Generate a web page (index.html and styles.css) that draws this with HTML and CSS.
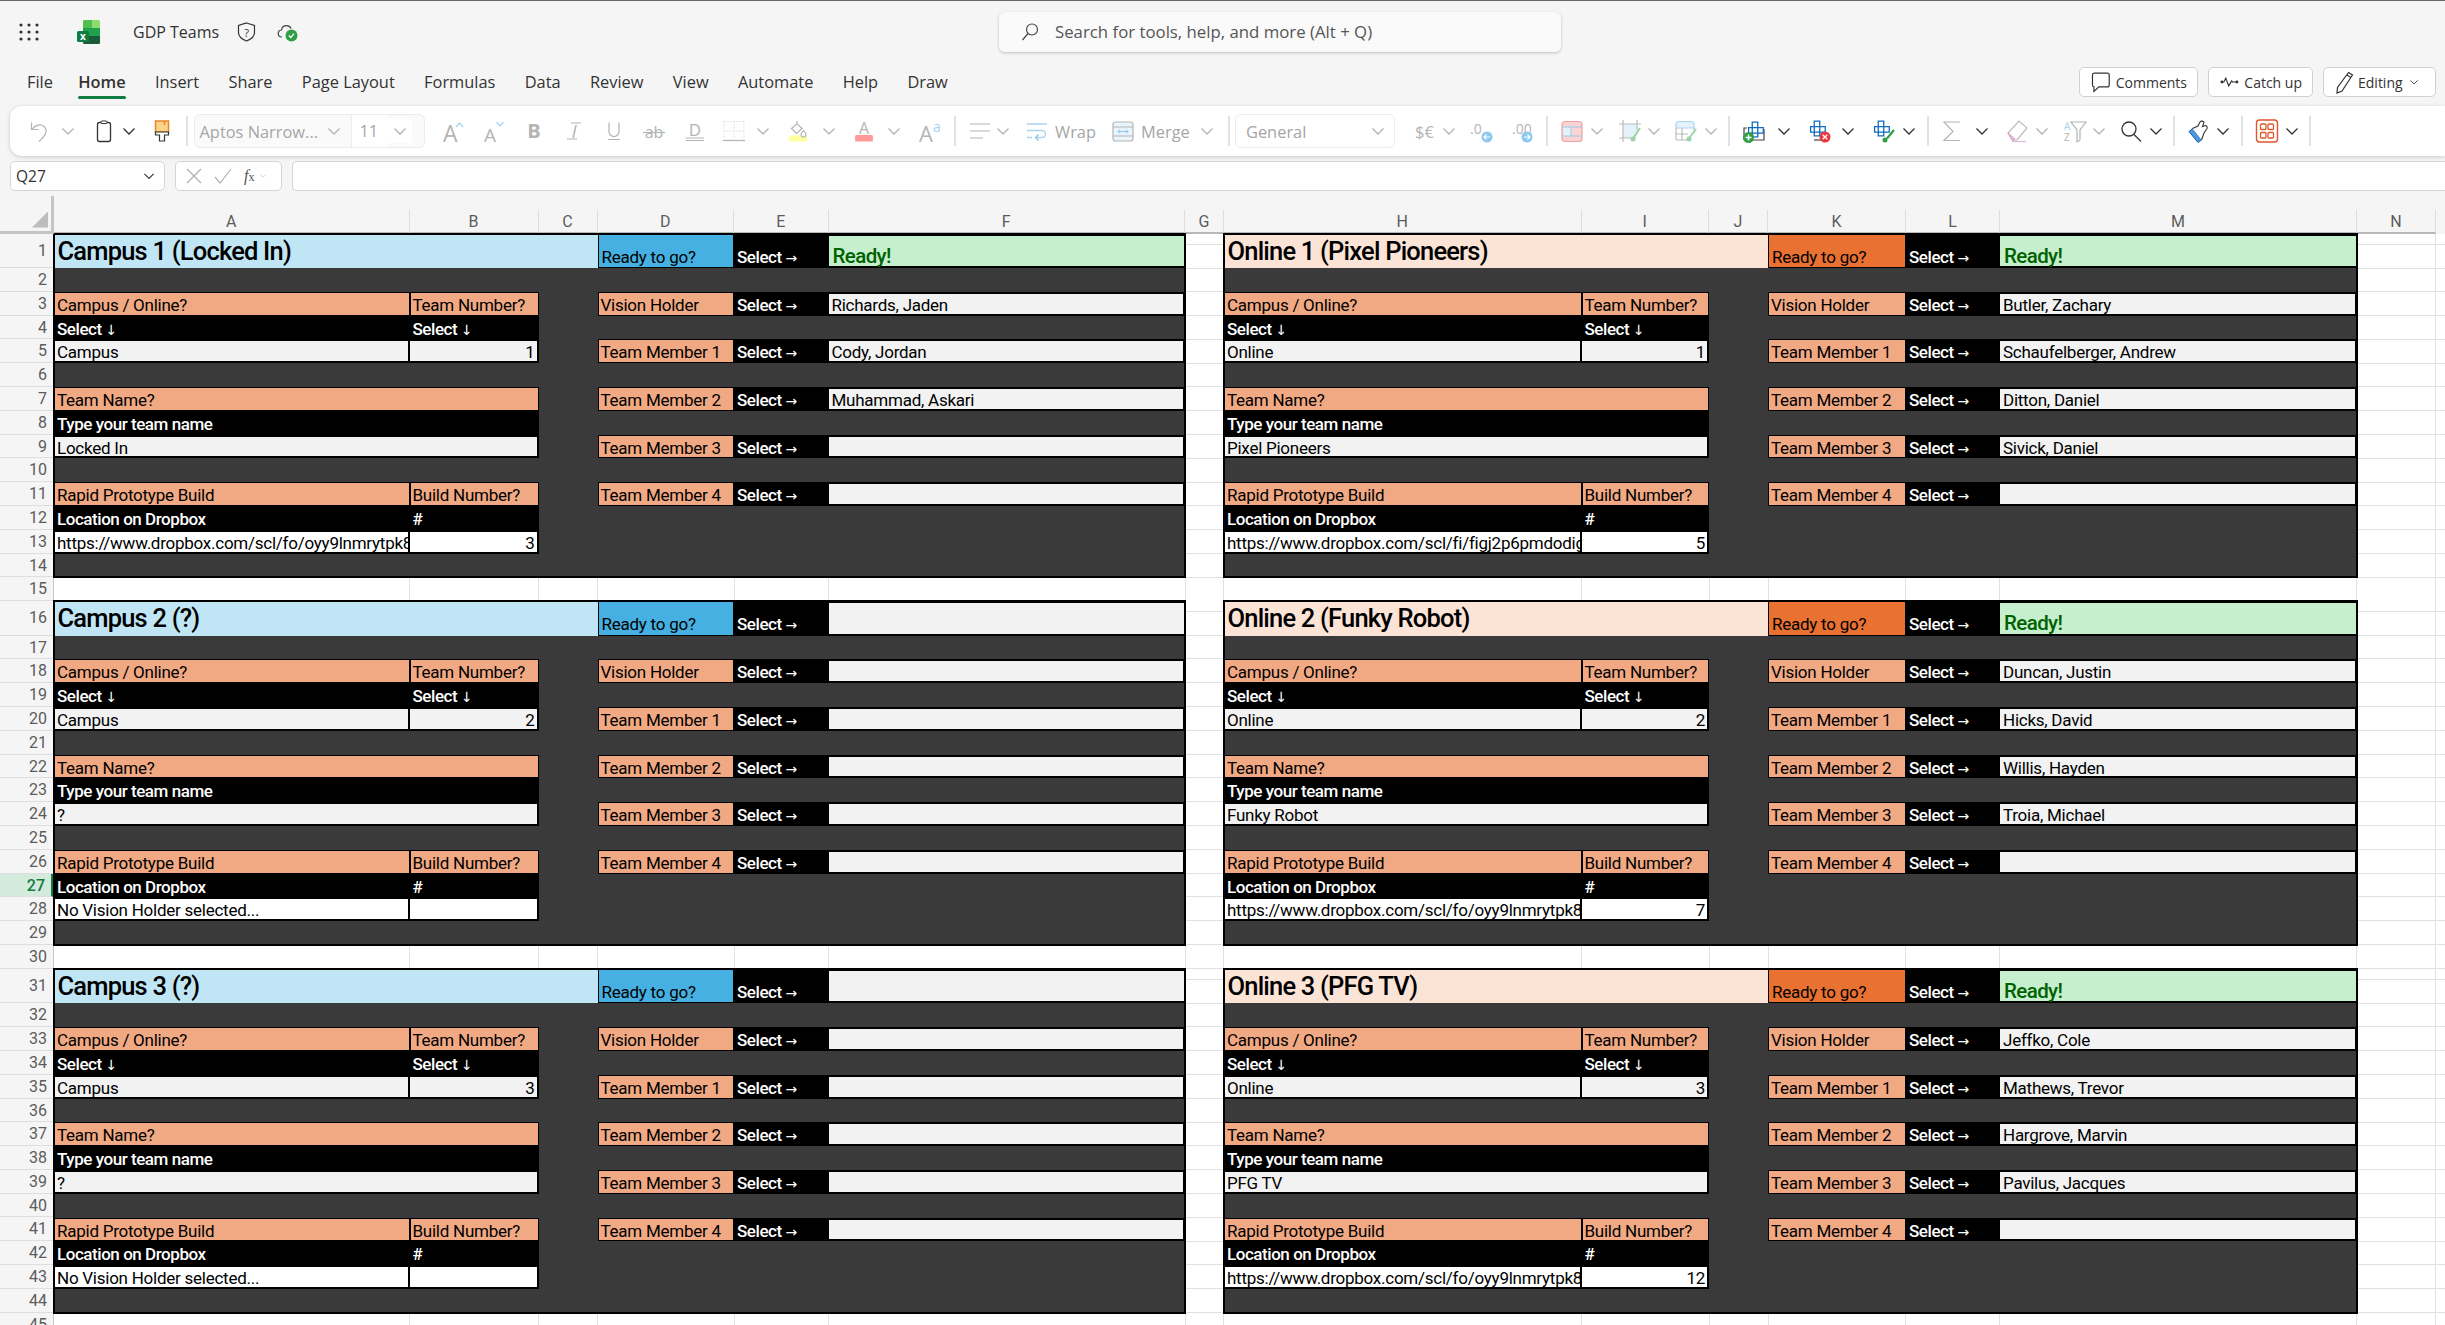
FILE: index.html
```html
<!DOCTYPE html>
<html lang="en">
<head>
    <meta charset="UTF-8">
    <title>GDP Teams</title>
    <link rel="stylesheet" href="styles.css">
</head>
<body>
    <svg class="defs" width="0" height="0">
        <symbol id="chev" viewBox="0 0 24 24"><path d="M6.5 9.5l5.5 5.5 5.5-5.5" fill="none" stroke="currentColor" stroke-width="1.3"/></symbol>
        <symbol id="sep" viewBox="0 0 24 30"><path d="M12 0v30" stroke="#c4c4c4" stroke-width="1"/></symbol>
        <symbol id="crossblue" viewBox="0 0 24 24">
            <path d="M9 3.5h6v6h6v6h-6v4H9v-4H5v-6h4z" fill="#fff" stroke="#0f6cbd" stroke-width="1.4"/>
            <path d="M9 9.5h6v6H9z" fill="none" stroke="#0f6cbd" stroke-width="1.4"/>
        </symbol>
    </svg>

    <header class="titlebar">
        <svg class="waffle" width="20" height="18" viewBox="0 0 20 18" fill="#333">
            <circle cx="2" cy="2" r="1.6"/><circle cx="10" cy="2" r="1.6"/><circle cx="18" cy="2" r="1.6"/>
            <circle cx="2" cy="9" r="1.6"/><circle cx="10" cy="9" r="1.6"/><circle cx="18" cy="9" r="1.6"/>
            <circle cx="2" cy="16" r="1.6"/><circle cx="10" cy="16" r="1.6"/><circle cx="18" cy="16" r="1.6"/>
        </svg>
        <svg class="logo" width="23" height="24" viewBox="0 0 23 24">
            <path d="M6 1.5A1.5 1.5 0 0 1 7.500 0H17v8H6z" fill="#4fbf4f"/>
            <path d="M15 0h6.500A1.500 1.500 0 0 1 23 1.500V8h-8z" fill="#8ddc6e"/>
            <path d="M6 8h17v8H6z" fill="#21a04e"/>
            <path d="M6 16h17v6.500a1.500 1.500 0 0 1-1.500 1.500h-14A1.500 1.500 0 0 1 6 22.500z" fill="#185c37"/>
            <rect x="0" y="11" width="12" height="11" rx="1.500" fill="#107c41"/>
            <text x="6" y="20" text-anchor="middle" font-family="Open Sans" font-size="10" font-weight="700" fill="#fff">x</text>
        </svg>
        <span class="doc-name">GDP Teams</span>
        <svg class="shield" width="21" height="20" viewBox="0 0 21 20">
            <path d="M10.500 1l8 2.500v7c0 4-3.500 6.800-8 8.500-4.500-1.700-8-4.500-8-8.500v-7z" fill="none" stroke="#333" stroke-width="1.200"/>
            <text x="10.500" y="14.500" text-anchor="middle" font-family="Open Sans" font-size="11" fill="#333">?</text>
        </svg>
        <svg class="cloud" width="21" height="20" viewBox="0 0 21 20">
            <path d="M5 15a3.500 3.500 0 0 1-.5-7A5 5 0 0 1 14 6.500" fill="none" stroke="#444" stroke-width="1.200"/>
            <circle cx="14.500" cy="13.500" r="6" fill="#2f9e44"/>
            <path d="M11.800 13.500l2 2 3.200-3.800" fill="none" stroke="#fff" stroke-width="1.200"/>
        </svg>
        <div class="search">
            <svg width="18" height="20" viewBox="0 0 18 20"><circle cx="11" cy="7.500" r="5.500" fill="none" stroke="#444" stroke-width="1.200"/><path d="M7 11.500L1.500 18" stroke="#444" stroke-width="1.200"/></svg>
            <span>Search for tools, help, and more (Alt + Q)</span>
        </div>
    </header>

    <nav class="tabs">
        <span class="tab tab-file">File</span>
        <span class="tab tab-active">Home</span>
        <span class="tab">Insert</span>
        <span class="tab">Share</span>
        <span class="tab">Page Layout</span>
        <span class="tab">Formulas</span>
        <span class="tab">Data</span>
        <span class="tab">Review</span>
        <span class="tab">View</span>
        <span class="tab">Automate</span>
        <span class="tab">Help</span>
        <span class="tab">Draw</span>
        <div class="actions">
            <button class="action comments">
                <svg width="20" height="22" viewBox="0 0 20 22"><path d="M3.500 2h13A2 2 0 0 1 18.500 4v10a2 2 0 0 1-2 2H8l-5 4.500V16a2 2 0 0 1-1.500-2V4a2 2 0 0 1 2-2z" fill="none" stroke="#333" stroke-width="1.200"/></svg>
                Comments
            </button>
            <button class="action catchup">
                <svg width="20" height="12" viewBox="0 0 20 12"><path d="M1 6h3l2-4 3 8 3-5 1 1h5" fill="none" stroke="#333" stroke-width="1.200"/><circle cx="2" cy="6" r="1.500" fill="#333"/><circle cx="17.500" cy="6" r="1.500" fill="#333"/></svg>
                Catch up
            </button>
            <button class="action editing">
                <svg width="20" height="24" viewBox="0 0 20 24"><path d="M13.500 2.500l4 2.500L7 21l-5 2 .5-5.500zM12 5l4 2.500" fill="none" stroke="#333" stroke-width="1.200"/></svg>
                Editing
                <svg class="chev-sm" width="16" height="16"><use href="#chev"/></svg>
            </button>
        </div>
    </nav>

    <section class="ribbon">
        <svg class="ico" viewBox="0 0 24 24"><path d="M3.500 3.500v7h7M4 10.500C7 6 12.500 4.500 16 7.500c4 3.500 2.500 8-5 15" fill="none" stroke="currentColor" stroke-width="1.200"/></svg>
        <svg class="ico"><use href="#chev"/></svg>
        <svg class="ico ico-on" viewBox="0 0 24 24"><rect x="5.500" y="3.500" width="13" height="19" rx="2" fill="none" stroke="currentColor" stroke-width="1.300"/><rect x="9" y="2" width="6" height="2.500" rx="1" fill="#fff" stroke="currentColor"/></svg>
        <svg class="ico ico-on"><use href="#chev"/></svg>
        <svg class="ico" viewBox="0 0 24 24"><rect x="5.500" y="2" width="13" height="11" fill="#fbd38a" stroke="#e8862a" stroke-width="1.500"/><path d="M14.500 2v4" stroke="#e8862a" stroke-width="1.500"/><path d="M5.500 13h13v3h-4v6h-5v-6h-4z" fill="#fff" stroke="#333" stroke-width="1.200"/></svg>
        <svg class="ico ico-sep"><use href="#sep"/></svg>

        <div class="font-box">
            <span class="font-name">Aptos Narrow...</span>
            <svg class="ico"><use href="#chev"/></svg>
            <span class="font-size">11</span>
            <svg class="ico"><use href="#chev"/></svg>
        </div>

        <svg class="ico" viewBox="0 0 24 24"><text x="3" y="22.500" font-size="23" class="glyph">A</text><path d="M16 8l3.500-4 3.500 4" fill="none" stroke="#a8d4f0" stroke-width="1.300"/></svg>
        <svg class="ico" viewBox="0 0 24 24"><text x="4" y="22.500" font-size="19" class="glyph">A</text><path d="M16.500 3l3.500 4 3.500-4" fill="none" stroke="#a8d4f0" stroke-width="1.300"/></svg>
        <svg class="ico" viewBox="0 0 24 24"><text x="12" y="19" text-anchor="middle" font-size="20" font-weight="700" class="glyph">B</text></svg>
        <svg class="ico" viewBox="0 0 24 24"><text x="12" y="19" text-anchor="middle" font-size="19" font-style="italic" class="glyph">I</text><path d="M9 4h10M5 20h10" stroke="currentColor" stroke-width="1"/></svg>
        <svg class="ico" viewBox="0 0 24 24"><path d="M7 3.500v9a5 5 0 0 0 10 0v-9M6 20.500h12" fill="none" stroke="currentColor" stroke-width="1.200"/></svg>
        <svg class="ico" viewBox="0 0 24 24"><text x="12" y="19" text-anchor="middle" font-size="16" class="glyph">ab</text><path d="M1 13.500h22" stroke="currentColor" stroke-width="1.200"/></svg>
        <svg class="ico" viewBox="0 0 24 24"><text x="12" y="16.500" text-anchor="middle" font-size="17" class="glyph">D</text><path d="M3 19h18M3 21.500h18" stroke="currentColor" stroke-width="1.200"/></svg>
        <svg class="ico" viewBox="0 0 24 24"><path d="M2 2.500h20M2 12h20M12 2v18M2 2v18M22 2v18" stroke="#ddd" stroke-width="1" stroke-dasharray="1.500 1.500" fill="none"/><path d="M1 21.500h22" stroke="currentColor" stroke-width="1.300"/></svg>
        <svg class="ico"><use href="#chev"/></svg>
        <svg class="ico" viewBox="0 0 24 24"><rect x="4" y="16.500" width="18" height="6" rx="1.500" fill="#ffff9e"/><path d="M12 2v3M6.500 9.500L12 4.500l5 5-5.500 5z" fill="#fff" stroke="currentColor" stroke-width="1.200"/><path d="M18.500 11.500c-2 2.500-2.500 3-2.500 4a2.500 2.500 0 0 0 5 0c0-1-.5-1.500-2.500-4z" fill="#fff" stroke="currentColor" stroke-width="1.200"/></svg>
        <svg class="ico"><use href="#chev"/></svg>
        <svg class="ico" viewBox="0 0 24 24"><text x="12" y="15" text-anchor="middle" font-size="16" class="glyph">A</text><rect x="3" y="16" width="18" height="6.500" rx="1.500" fill="#ff9a9a"/></svg>
        <svg class="ico"><use href="#chev"/></svg>
        <svg class="ico" viewBox="0 0 24 24"><text x="2" y="22.500" font-size="22" class="glyph">A</text><text x="16" y="13" font-size="14" fill="#a8d4f0" font-family="Open Sans">a</text></svg>
        <svg class="ico ico-sep"><use href="#sep"/></svg>

        <svg class="ico" viewBox="0 0 24 24"><path d="M2 5h20M2 12h20M2 19h13" stroke="currentColor" stroke-width="1.200"/></svg>
        <svg class="ico"><use href="#chev"/></svg>
        <div class="tool-text">
            <svg class="ico" viewBox="0 0 24 24"><path d="M2 5h20M2 11.500h15a3.500 3.500 0 0 1 0 7h-6M2 18.500h5" fill="none" stroke="#a8d4f0" stroke-width="1.300"/><path d="M13.500 15.500l-3 3 3 3" fill="none" stroke="#8cc4ea" stroke-width="1.300"/></svg>
            Wrap
        </div>
        <div class="tool-text">
            <svg class="ico" viewBox="0 0 24 24"><rect x="2" y="3" width="20" height="19" rx="2.500" fill="#e9f4fb" stroke="currentColor" stroke-width="1.200"/><path d="M2 8h20M2 17h20" stroke="currentColor"/><path d="M7 12.500h10M9 10.500l-2 2 2 2M15 10.500l2 2-2 2" fill="none" stroke="#8cc4ea"/></svg>
            Merge
        </div>
        <svg class="ico"><use href="#chev"/></svg>
        <svg class="ico ico-sep"><use href="#sep"/></svg>

        <div class="general-box">
            <span>General</span>
            <svg class="ico"><use href="#chev"/></svg>
        </div>

        <svg class="ico" viewBox="0 0 24 24"><text x="11.500" y="19" text-anchor="middle" font-size="16.500" class="glyph">$€</text></svg>
        <svg class="ico"><use href="#chev"/></svg>
        <svg class="ico" viewBox="0 0 24 24"><text x="5" y="15" font-size="14" class="glyph">.0</text><circle cx="22" cy="18" r="5.500" fill="#8cc8ee"/><path d="M19 18h6M21.500 15.500L19 18l2.500 2.500" fill="none" stroke="#fff" stroke-width="1.200"/></svg>
        <svg class="ico" viewBox="0 0 24 24"><text x="5" y="15" font-size="14" class="glyph">.00</text><circle cx="20" cy="18" r="5.500" fill="#8cc8ee"/><path d="M17 18h6M20.500 15.500L23 18l-2.500 2.500" fill="none" stroke="#fff" stroke-width="1.200"/></svg>
        <svg class="ico ico-sep"><use href="#sep"/></svg>

        <svg class="ico" viewBox="0 0 24 24"><rect x="2" y="2.500" width="20" height="20" rx="3" fill="#fbd5d5" stroke="#f0a0a0" stroke-width="1.200"/><rect x="3" y="8" width="8" height="9" fill="#e6f2fb"/><path d="M2 8h20M2 17h20M11 8v9" stroke="#9cc8e8"/></svg>
        <svg class="ico"><use href="#chev"/></svg>
        <svg class="ico" viewBox="0 0 24 24"><rect x="5" y="5" width="14" height="14" fill="#e6f2fb"/><path d="M1 5h22M1 19h14M5 1v22M19 1v10" stroke="#bbb" stroke-width="1.200" fill="none"/><path d="M22 9l-6 9" stroke="#9bd3a5" stroke-width="2"/><circle cx="15" cy="20" r="2.500" fill="#9bd3a5"/></svg>
        <svg class="ico"><use href="#chev"/></svg>
        <svg class="ico" viewBox="0 0 24 24"><path d="M2 5.500a3 3 0 0 1 3-3h12a3 3 0 0 1 3 3V9H2z" fill="#e6f2fb" stroke="#a8d4f0" stroke-width="1.200"/><path d="M2 9v10a2 2 0 0 0 2 2h9M2 15h12M8 9v12M20 9v2" fill="none" stroke="#bbb" stroke-width="1.200"/><path d="M22 10l-6 8" stroke="#9bd3a5" stroke-width="2"/><circle cx="15" cy="20" r="2.500" fill="#9bd3a5"/></svg>
        <svg class="ico"><use href="#chev"/></svg>
        <svg class="ico ico-sep"><use href="#sep"/></svg>

        <svg class="ico" viewBox="0 0 24 24"><path d="M2 21v-12h3M2 21h20V10" fill="none" stroke="#444" stroke-width="1.200"/><use href="#crossblue" x="2" y="0" width="22" height="22"/><circle cx="6.500" cy="18.500" r="5.500" fill="#2f9e44"/><path d="M3.500 18.500h6M6.500 15.500v6" stroke="#fff" stroke-width="1.500"/></svg>
        <svg class="ico ico-on"><use href="#chev"/></svg>
        <svg class="ico" viewBox="0 0 24 24"><use href="#crossblue" x="-2" y="-1" width="22" height="22"/><path d="M6 21H18" stroke="#444" stroke-width="1.200"/><circle cx="17" cy="18" r="5.500" fill="#e8383d"/><path d="M14.700 15.700l4.600 4.600M19.300 15.700l-4.600 4.600" stroke="#fff" stroke-width="1.300"/></svg>
        <svg class="ico ico-on"><use href="#chev"/></svg>
        <svg class="ico" viewBox="0 0 24 24"><use href="#crossblue" x="-2" y="-1" width="22" height="22"/><path d="M22 11l-7 8.500" stroke="#2f9e44" stroke-width="2.200"/><circle cx="13" cy="21" r="2.500" fill="#2f9e44"/></svg>
        <svg class="ico ico-on"><use href="#chev"/></svg>
        <svg class="ico ico-sep"><use href="#sep"/></svg>

        <svg class="ico" viewBox="0 0 24 24"><path d="M20 3H4l9 9.500-9 9h16" fill="none" stroke="currentColor" stroke-width="1.200"/></svg>
        <svg class="ico ico-on"><use href="#chev"/></svg>
        <svg class="ico" viewBox="0 0 24 24"><path d="M3 14L14 2l8 7-10 12H8z" fill="#fff" stroke="#bbb" stroke-width="1.200"/><path d="M3 14l7 6-2 1.500H7z" fill="#e8b8e0" stroke="#d8a0d0"/><path d="M7 22.500h14" stroke="#e0b4dc" stroke-width="1.200"/></svg>
        <svg class="ico"><use href="#chev"/></svg>
        <svg class="ico" viewBox="0 0 24 24"><text x="1" y="11" font-size="10" fill="#a8d4f0" font-family="Open Sans">A</text><text x="1" y="22" font-size="10" class="glyph">Z</text><path d="M8 3h15l-6 8v10l-3 2V11z" fill="none" stroke="currentColor" stroke-width="1.200"/></svg>
        <svg class="ico"><use href="#chev"/></svg>
        <svg class="ico ico-on" viewBox="0 0 24 24"><circle cx="10" cy="10" r="7" fill="none" stroke="currentColor" stroke-width="1.300"/><path d="M15 15.500l7 7" stroke="currentColor" stroke-width="1.300"/></svg>
        <svg class="ico ico-on"><use href="#chev"/></svg>
        <svg class="ico ico-sep"><use href="#sep"/></svg>

        <svg class="ico ico-on" viewBox="0 0 24 24"><path d="M3 12.500l3.500-3 9 11.500-3.500 2.500z" fill="#4a98e0" stroke="#1f5f9e"/><path d="M6.500 9.500L12 7l2-4c1-1.500 3.500-1 4 .5l-1.500 4 3-1c1.500 0 2 2 1.500 3L18 14l-2.500 7" fill="#fff" stroke="currentColor" stroke-width="1.100"/></svg>
        <svg class="ico ico-on"><use href="#chev"/></svg>
        <svg class="ico ico-sep"><use href="#sep"/></svg>

        <svg class="ico" viewBox="0 0 24 24"><rect x="1.500" y="1" width="21" height="22" rx="3" fill="#fff" stroke="#e0562b" stroke-width="1.400"/><rect x="5.500" y="5" width="5.500" height="5.500" rx="1" fill="none" stroke="#e0562b" stroke-width="1.300"/><rect x="13" y="5" width="5.500" height="5.500" rx="1" fill="none" stroke="#e0562b" stroke-width="1.300"/><rect x="5.500" y="13.500" width="5.500" height="5.500" rx="1" fill="none" stroke="#e0562b" stroke-width="1.300"/><rect x="13" y="13.500" width="5.500" height="5.500" rx="1" fill="none" stroke="#e0562b" stroke-width="1.300"/></svg>
        <svg class="ico ico-on"><use href="#chev"/></svg>
        <svg class="ico ico-sep"><use href="#sep"/></svg>
    </section>

    <section class="formula-row">
        <div class="name-box">Q27<svg width="20" height="20"><use href="#chev"/></svg></div>
        <div class="formula-btns">
            <svg width="18" height="18" viewBox="0 0 18 18"><path d="M2 2l14 14M16 2L2 16" stroke="#b0b0b0" stroke-width="1.200"/></svg>
            <svg width="20" height="18" viewBox="0 0 20 18"><path d="M2 10l5 6L18 2" fill="none" stroke="#b0b0b0" stroke-width="1.200"/></svg>
            <span class="fx"><i>f</i><small>x</small></span>
            <svg width="10" height="10" viewBox="0 0 24 24"><use href="#chev" class="fx-chev"/></svg>
        </div>
        <div class="formula-input"></div>
    </section>

    <div class="col-head">
        <div class="corner"><span class="corner-tri"></span></div>
        <div class="col col-a">A</div><div class="col col-b">B</div><div class="col col-c">C</div>
        <div class="col col-d">D</div><div class="col col-e">E</div><div class="col col-f">F</div>
        <div class="col col-g">G</div>
        <div class="col col-h">H</div><div class="col col-i">I</div><div class="col col-j">J</div>
        <div class="col col-k">K</div><div class="col col-l">L</div><div class="col col-m">M</div>
        <div class="col col-n">N</div>
    </div>

    <main class="sheet">
        <div class="row-heads">
            <div class="rh rh-tall">1</div><div class="rh">2</div><div class="rh">3</div><div class="rh">4</div><div class="rh">5</div>
            <div class="rh">6</div><div class="rh">7</div><div class="rh">8</div><div class="rh">9</div><div class="rh">10</div>
            <div class="rh">11</div><div class="rh">12</div><div class="rh">13</div><div class="rh">14</div><div class="rh">15</div>
            <div class="rh rh-tall">16</div><div class="rh">17</div><div class="rh">18</div><div class="rh">19</div><div class="rh">20</div>
            <div class="rh">21</div><div class="rh">22</div><div class="rh">23</div><div class="rh">24</div><div class="rh">25</div>
            <div class="rh">26</div><div class="rh rh-sel">27</div><div class="rh">28</div><div class="rh">29</div><div class="rh">30</div>
            <div class="rh rh-tall">31</div><div class="rh">32</div><div class="rh">33</div><div class="rh">34</div><div class="rh">35</div>
            <div class="rh">36</div><div class="rh">37</div><div class="rh">38</div><div class="rh">39</div><div class="rh">40</div>
            <div class="rh">41</div><div class="rh">42</div><div class="rh">43</div><div class="rh">44</div><div class="rh">45</div>
        </div>

        <div class="bands">
            <!-- row 1-15 -->
            <div class="band">
                <div class="block campus">
                    <div class="title">Campus 1 (Locked In)</div>
                    <div class="cell go c-d r-1">Ready to go?</div>
                    <div class="cell prompt c-e r-1">Select <span class="arrow">→</span></div>
                    <div class="status c-f r-1 ok">Ready!</div>
                    <div class="cell label c-a r-3">Campus / Online?</div>
                    <div class="cell label c-b r-3">Team Number?</div>
                    <div class="cell prompt c-a r-4">Select <span class="arrow">↓</span></div>
                    <div class="cell prompt c-b r-4">Select <span class="arrow">↓</span></div>
                    <div class="cell input c-a r-5">Campus</div>
                    <div class="cell input num c-b r-5">1</div>
                    <div class="cell label c-ab r-7">Team Name?</div>
                    <div class="cell prompt c-ab r-8">Type your team name</div>
                    <div class="cell input c-ab r-9">Locked In</div>
                    <div class="cell label c-a r-11">Rapid Prototype Build</div>
                    <div class="cell label c-b r-11">Build Number?</div>
                    <div class="cell prompt c-a r-12">Location on Dropbox</div>
                    <div class="cell prompt c-b r-12">#</div>
                    <div class="cell input white c-a r-13">https://www.dropbox.com/scl/fo/oyy9lnmrytpk8l</div>
                    <div class="cell input white num c-b r-13">3</div>
                    <div class="cell label c-d r-3">Vision Holder</div><div class="cell prompt c-e r-3">Select <span class="arrow">→</span></div><div class="cell input c-f r-3">Richards, Jaden</div>
                    <div class="cell label c-d r-5">Team Member 1</div><div class="cell prompt c-e r-5">Select <span class="arrow">→</span></div><div class="cell input c-f r-5">Cody, Jordan</div>
                    <div class="cell label c-d r-7">Team Member 2</div><div class="cell prompt c-e r-7">Select <span class="arrow">→</span></div><div class="cell input c-f r-7">Muhammad, Askari</div>
                    <div class="cell label c-d r-9">Team Member 3</div><div class="cell prompt c-e r-9">Select <span class="arrow">→</span></div><div class="cell input c-f r-9"></div>
                    <div class="cell label c-d r-11">Team Member 4</div><div class="cell prompt c-e r-11">Select <span class="arrow">→</span></div><div class="cell input c-f r-11"></div>
                </div>
                <div class="block online">
                    <div class="title">Online 1 (Pixel Pioneers)</div>
                    <div class="cell go c-d r-1">Ready to go?</div>
                    <div class="cell prompt c-e r-1">Select <span class="arrow">→</span></div>
                    <div class="status c-f r-1 ok">Ready!</div>
                    <div class="cell label c-a r-3">Campus / Online?</div>
                    <div class="cell label c-b r-3">Team Number?</div>
                    <div class="cell prompt c-a r-4">Select <span class="arrow">↓</span></div>
                    <div class="cell prompt c-b r-4">Select <span class="arrow">↓</span></div>
                    <div class="cell input c-a r-5">Online</div>
                    <div class="cell input num c-b r-5">1</div>
                    <div class="cell label c-ab r-7">Team Name?</div>
                    <div class="cell prompt c-ab r-8">Type your team name</div>
                    <div class="cell input c-ab r-9">Pixel Pioneers</div>
                    <div class="cell label c-a r-11">Rapid Prototype Build</div>
                    <div class="cell label c-b r-11">Build Number?</div>
                    <div class="cell prompt c-a r-12">Location on Dropbox</div>
                    <div class="cell prompt c-b r-12">#</div>
                    <div class="cell input white c-a r-13">https://www.dropbox.com/scl/fi/figj2p6pmdodig</div>
                    <div class="cell input white num c-b r-13">5</div>
                    <div class="cell label c-d r-3">Vision Holder</div><div class="cell prompt c-e r-3">Select <span class="arrow">→</span></div><div class="cell input c-f r-3">Butler, Zachary</div>
                    <div class="cell label c-d r-5">Team Member 1</div><div class="cell prompt c-e r-5">Select <span class="arrow">→</span></div><div class="cell input c-f r-5">Schaufelberger, Andrew</div>
                    <div class="cell label c-d r-7">Team Member 2</div><div class="cell prompt c-e r-7">Select <span class="arrow">→</span></div><div class="cell input c-f r-7">Ditton, Daniel</div>
                    <div class="cell label c-d r-9">Team Member 3</div><div class="cell prompt c-e r-9">Select <span class="arrow">→</span></div><div class="cell input c-f r-9">Sivick, Daniel</div>
                    <div class="cell label c-d r-11">Team Member 4</div><div class="cell prompt c-e r-11">Select <span class="arrow">→</span></div><div class="cell input c-f r-11"></div>
                </div>
            </div>

            <!-- row 16-30 -->
            <div class="band">
                <div class="block campus">
                    <div class="title">Campus 2 (?)</div>
                    <div class="cell go c-d r-1">Ready to go?</div>
                    <div class="cell prompt c-e r-1">Select <span class="arrow">→</span></div>
                    <div class="status c-f r-1"></div>
                    <div class="cell label c-a r-3">Campus / Online?</div>
                    <div class="cell label c-b r-3">Team Number?</div>
                    <div class="cell prompt c-a r-4">Select <span class="arrow">↓</span></div>
                    <div class="cell prompt c-b r-4">Select <span class="arrow">↓</span></div>
                    <div class="cell input c-a r-5">Campus</div>
                    <div class="cell input num c-b r-5">2</div>
                    <div class="cell label c-ab r-7">Team Name?</div>
                    <div class="cell prompt c-ab r-8">Type your team name</div>
                    <div class="cell input c-ab r-9">?</div>
                    <div class="cell label c-a r-11">Rapid Prototype Build</div>
                    <div class="cell label c-b r-11">Build Number?</div>
                    <div class="cell prompt c-a r-12">Location on Dropbox</div>
                    <div class="cell prompt c-b r-12">#</div>
                    <div class="cell input white c-a r-13">No Vision Holder selected...</div>
                    <div class="cell input white num c-b r-13"></div>
                    <div class="cell label c-d r-3">Vision Holder</div><div class="cell prompt c-e r-3">Select <span class="arrow">→</span></div><div class="cell input c-f r-3"></div>
                    <div class="cell label c-d r-5">Team Member 1</div><div class="cell prompt c-e r-5">Select <span class="arrow">→</span></div><div class="cell input c-f r-5"></div>
                    <div class="cell label c-d r-7">Team Member 2</div><div class="cell prompt c-e r-7">Select <span class="arrow">→</span></div><div class="cell input c-f r-7"></div>
                    <div class="cell label c-d r-9">Team Member 3</div><div class="cell prompt c-e r-9">Select <span class="arrow">→</span></div><div class="cell input c-f r-9"></div>
                    <div class="cell label c-d r-11">Team Member 4</div><div class="cell prompt c-e r-11">Select <span class="arrow">→</span></div><div class="cell input c-f r-11"></div>
                </div>
                <div class="block online">
                    <div class="title">Online 2 (Funky Robot)</div>
                    <div class="cell go c-d r-1">Ready to go?</div>
                    <div class="cell prompt c-e r-1">Select <span class="arrow">→</span></div>
                    <div class="status c-f r-1 ok">Ready!</div>
                    <div class="cell label c-a r-3">Campus / Online?</div>
                    <div class="cell label c-b r-3">Team Number?</div>
                    <div class="cell prompt c-a r-4">Select <span class="arrow">↓</span></div>
                    <div class="cell prompt c-b r-4">Select <span class="arrow">↓</span></div>
                    <div class="cell input c-a r-5">Online</div>
                    <div class="cell input num c-b r-5">2</div>
                    <div class="cell label c-ab r-7">Team Name?</div>
                    <div class="cell prompt c-ab r-8">Type your team name</div>
                    <div class="cell input c-ab r-9">Funky Robot</div>
                    <div class="cell label c-a r-11">Rapid Prototype Build</div>
                    <div class="cell label c-b r-11">Build Number?</div>
                    <div class="cell prompt c-a r-12">Location on Dropbox</div>
                    <div class="cell prompt c-b r-12">#</div>
                    <div class="cell input white c-a r-13">https://www.dropbox.com/scl/fo/oyy9lnmrytpk8l</div>
                    <div class="cell input white num c-b r-13">7</div>
                    <div class="cell label c-d r-3">Vision Holder</div><div class="cell prompt c-e r-3">Select <span class="arrow">→</span></div><div class="cell input c-f r-3">Duncan, Justin</div>
                    <div class="cell label c-d r-5">Team Member 1</div><div class="cell prompt c-e r-5">Select <span class="arrow">→</span></div><div class="cell input c-f r-5">Hicks, David</div>
                    <div class="cell label c-d r-7">Team Member 2</div><div class="cell prompt c-e r-7">Select <span class="arrow">→</span></div><div class="cell input c-f r-7">Willis, Hayden</div>
                    <div class="cell label c-d r-9">Team Member 3</div><div class="cell prompt c-e r-9">Select <span class="arrow">→</span></div><div class="cell input c-f r-9">Troia, Michael</div>
                    <div class="cell label c-d r-11">Team Member 4</div><div class="cell prompt c-e r-11">Select <span class="arrow">→</span></div><div class="cell input c-f r-11"></div>
                </div>
            </div>

            <!-- row 31-45 -->
            <div class="band">
                <div class="block campus">
                    <div class="title">Campus 3 (?)</div>
                    <div class="cell go c-d r-1">Ready to go?</div>
                    <div class="cell prompt c-e r-1">Select <span class="arrow">→</span></div>
                    <div class="status c-f r-1"></div>
                    <div class="cell label c-a r-3">Campus / Online?</div>
                    <div class="cell label c-b r-3">Team Number?</div>
                    <div class="cell prompt c-a r-4">Select <span class="arrow">↓</span></div>
                    <div class="cell prompt c-b r-4">Select <span class="arrow">↓</span></div>
                    <div class="cell input c-a r-5">Campus</div>
                    <div class="cell input num c-b r-5">3</div>
                    <div class="cell label c-ab r-7">Team Name?</div>
                    <div class="cell prompt c-ab r-8">Type your team name</div>
                    <div class="cell input c-ab r-9">?</div>
                    <div class="cell label c-a r-11">Rapid Prototype Build</div>
                    <div class="cell label c-b r-11">Build Number?</div>
                    <div class="cell prompt c-a r-12">Location on Dropbox</div>
                    <div class="cell prompt c-b r-12">#</div>
                    <div class="cell input white c-a r-13">No Vision Holder selected...</div>
                    <div class="cell input white num c-b r-13"></div>
                    <div class="cell label c-d r-3">Vision Holder</div><div class="cell prompt c-e r-3">Select <span class="arrow">→</span></div><div class="cell input c-f r-3"></div>
                    <div class="cell label c-d r-5">Team Member 1</div><div class="cell prompt c-e r-5">Select <span class="arrow">→</span></div><div class="cell input c-f r-5"></div>
                    <div class="cell label c-d r-7">Team Member 2</div><div class="cell prompt c-e r-7">Select <span class="arrow">→</span></div><div class="cell input c-f r-7"></div>
                    <div class="cell label c-d r-9">Team Member 3</div><div class="cell prompt c-e r-9">Select <span class="arrow">→</span></div><div class="cell input c-f r-9"></div>
                    <div class="cell label c-d r-11">Team Member 4</div><div class="cell prompt c-e r-11">Select <span class="arrow">→</span></div><div class="cell input c-f r-11"></div>
                </div>
                <div class="block online">
                    <div class="title">Online 3 (PFG TV)</div>
                    <div class="cell go c-d r-1">Ready to go?</div>
                    <div class="cell prompt c-e r-1">Select <span class="arrow">→</span></div>
                    <div class="status c-f r-1 ok">Ready!</div>
                    <div class="cell label c-a r-3">Campus / Online?</div>
                    <div class="cell label c-b r-3">Team Number?</div>
                    <div class="cell prompt c-a r-4">Select <span class="arrow">↓</span></div>
                    <div class="cell prompt c-b r-4">Select <span class="arrow">↓</span></div>
                    <div class="cell input c-a r-5">Online</div>
                    <div class="cell input num c-b r-5">3</div>
                    <div class="cell label c-ab r-7">Team Name?</div>
                    <div class="cell prompt c-ab r-8">Type your team name</div>
                    <div class="cell input c-ab r-9">PFG TV</div>
                    <div class="cell label c-a r-11">Rapid Prototype Build</div>
                    <div class="cell label c-b r-11">Build Number?</div>
                    <div class="cell prompt c-a r-12">Location on Dropbox</div>
                    <div class="cell prompt c-b r-12">#</div>
                    <div class="cell input white c-a r-13">https://www.dropbox.com/scl/fo/oyy9lnmrytpk8l</div>
                    <div class="cell input white num c-b r-13">12</div>
                    <div class="cell label c-d r-3">Vision Holder</div><div class="cell prompt c-e r-3">Select <span class="arrow">→</span></div><div class="cell input c-f r-3">Jeffko, Cole</div>
                    <div class="cell label c-d r-5">Team Member 1</div><div class="cell prompt c-e r-5">Select <span class="arrow">→</span></div><div class="cell input c-f r-5">Mathews, Trevor</div>
                    <div class="cell label c-d r-7">Team Member 2</div><div class="cell prompt c-e r-7">Select <span class="arrow">→</span></div><div class="cell input c-f r-7">Hargrove, Marvin</div>
                    <div class="cell label c-d r-9">Team Member 3</div><div class="cell prompt c-e r-9">Select <span class="arrow">→</span></div><div class="cell input c-f r-9">Pavilus, Jacques</div>
                    <div class="cell label c-d r-11">Team Member 4</div><div class="cell prompt c-e r-11">Select <span class="arrow">→</span></div><div class="cell input c-f r-11"></div>
                </div>
            </div>
        </div>
    </main>
</body>
</html>
```

FILE: styles.css
```css
* {
    box-sizing: border-box;
}

html, body {
    height: 100%;
}

body {
    margin: 0;
    overflow: hidden;
    background-color: #f5f5f5;
    border-top: 1px solid #666;
    color: #333;
    font-family: "Open Sans", sans-serif;
    font-size: 15px;
}

.defs {
    position: absolute;
}

/* title bar */
.titlebar {
    display: flex;
    align-items: center;
    height: 61px;
    padding-left: 19px;
}

.logo {
    margin-left: 38px;
}

.doc-name {
    margin-left: 33px;
    width: 103px;
    font-size: 16px;
    white-space: nowrap;
}

.cloud {
    margin-left: 20px;
}

.search {
    display: flex;
    align-items: center;
    gap: 16px;
    width: 562px;
    height: 40px;
    margin-left: 701px;
    padding-left: 22px;
    background-color: #fafafa;
    border-radius: 6px;
    box-shadow: 0 1px 3px rgba(0, 0, 0, 0.22);
    color: #555;
    font-size: 16.8px;
}

/* tabs */
.tabs {
    display: flex;
    align-items: center;
    gap: 29.3px;
    height: 44px;
    padding-left: 27px;
    padding-bottom: 5px;
    font-size: 16.4px;
}

.tab {
    position: relative;
    color: #333;
}

.tab-file {
    margin-right: -4px;
}

.tab-active {
    font-weight: 600;
}

.tab-active::after {
    content: "";
    position: absolute;
    left: 0;
    right: 0;
    bottom: -6px;
    height: 3px;
    background-color: #107c41;
    border-radius: 2px;
}

.actions {
    display: flex;
    gap: 10px;
    margin-left: auto;
    margin-right: 9px;
    margin-top: 1px;
}

.action {
    display: flex;
    align-items: center;
    gap: 5px;
    height: 30px;
    padding: 0 10px 0 11px;
    background-color: #fff;
    border: 1px solid #d1d1d1;
    border-radius: 5px;
    color: #333;
    font-family: inherit;
    font-size: 14px;
    white-space: nowrap;
}

.comments { width: 119px; }
.catchup { width: 105px; }
.editing { width: 113px; padding-right: 4px; gap: 3px; }

/* ribbon */
.ribbon {
    display: grid;
    grid-template-columns: 28px 36px 25px 33px 25px 18.5px 246.5px 40px 42px 40px 40px 40px 41px 39px 29px 34px 32px 35px 30px 35px 26px 25px 23px 34px 86px 84px 22px 18px 178px 24px 28px 42px 28px 25px 25px 33px 24px 32px 25px 18px 25px 30px 36px 28px 36px 25px 19px 24px 30px 35px 25px 33px 24px 32px 25px 18px 24px 25px 19px 25px 25px 18px 24px;
    align-items: center;
    justify-items: start;
    height: 50px;
    margin-left: 10px;
    padding-left: 18px;
    background-color: #fff;
    border-radius: 12px 0 0 12px;
    box-shadow: 0 1px 4px rgba(0, 0, 0, 0.18);
    color: #b0b0b0;
}

.ico {
    display: block;
    width: 24px;
    height: 24px;
    flex: none;
    overflow: visible;
    color: #b4b4b4;
}

.ico-on {
    color: #333;
}

.ico-sep {
    height: 30px;
}

.glyph {
    fill: #b4b4b4;
    font-family: "Open Sans", sans-serif;
}

.font-box {
    display: flex;
    align-items: center;
    width: 231px;
    height: 34px;
    background-color: #fafafa;
    border: 1px solid #ececec;
    border-radius: 6px;
    color: #a6a6a6;
    font-size: 16.4px;
}

.font-name {
    width: 127px;
    padding-left: 5px;
    white-space: nowrap;
}

.font-size {
    width: 37px;
    height: 100%;
    margin-left: 5px;
    padding-left: 8px;
    background-color: #fff;
    border-left: 1px solid #ececec;
    line-height: 32px;
}

.font-box .ico:last-child {
    background-color: #fff;
}

.tool-text {
    display: flex;
    align-items: center;
    gap: 6px;
    color: #a6a6a6;
    font-size: 16.4px;
}

.general-box {
    display: flex;
    align-items: center;
    justify-content: space-between;
    width: 160px;
    height: 34px;
    padding: 0 4px 0 10px;
    background-color: #fff;
    border: 1px solid #ececec;
    border-radius: 6px;
    color: #a6a6a6;
    font-size: 16.4px;
}

/* formula bar */
.formula-row {
    display: flex;
    gap: 10px;
    height: 30px;
    margin-top: 5px;
    padding-left: 10px;
}

.name-box,
.formula-btns,
.formula-input {
    background-color: #fff;
    border: 1px solid #d4d4d4;
    border-radius: 5px;
}

.name-box {
    display: flex;
    align-items: center;
    justify-content: space-between;
    width: 155px;
    padding: 0 5px;
    font-size: 15.5px;
}

.formula-btns {
    display: flex;
    align-items: center;
    gap: 10px;
    width: 107px;
    padding-left: 9px;
}

.fx {
    margin-left: 1px;
    font-family: "Liberation Serif", serif;
    font-size: 16px;
    color: #555;
}

.fx small {
    font-size: 12px;
}

.fx-chev {
    color: #aaa;
}

.formula-btns svg:last-child {
    margin-left: -6px;
}

.formula-input {
    flex: 1;
    margin-right: -10px;
    border-right: none;
}

/* column headers */
.col-head {
    display: flex;
    align-items: flex-end;
    height: 37.5px;
    margin-top: 5px;
}

.corner {
    position: relative;
    width: 54px;
    height: 37.5px;
    border-right: 3px solid #c4c4c4;
    border-bottom: 3px solid #c4c4c4;
}

.corner-tri {
    position: absolute;
    right: 3px;
    bottom: 3px;
    width: 16px;
    height: 16px;
    background-color: #bdbdbd;
    clip-path: polygon(100% 0, 100% 100%, 0 100%);
}

.col {
    height: 23.5px;
    border-right: 1px solid #dedede;
    border-bottom: 2px solid #b8b8b8;
    color: #5c5c5c;
    font-family: Roboto, sans-serif;
    font-size: 16px;
    line-height: 24px;
    text-align: center;
}

.col-a { width: 355.5px; }
.col-b { width: 129px; }
.col-c { width: 59px; }
.col-d { width: 136.5px; }
.col-e { width: 94.5px; }
.col-f { width: 356.5px; }
.col-g { width: 39px; }
.col-h { width: 357.5px; }
.col-i { width: 127.5px; }
.col-j { width: 59px; }
.col-k { width: 138px; }
.col-l { width: 94px; }
.col-m { width: 357px; }
.col-n { width: 79px; }

/* sheet */
.sheet {
    display: flex;
}

.row-heads {
    flex: none;
    width: 54px;
    border-right: 1px solid #c8c8c8;
}

.rh {
    height: 23.8px;
    padding-right: 6px;
    border-bottom: 1px solid #dedede;
    color: #5c5c5c;
    font-family: Roboto, sans-serif;
    font-size: 16px;
    line-height: 24px;
    text-align: right;
}

.rh-tall {
    height: 34.5px;
    line-height: 33px;
}

.rh-sel {
    background-color: #d3eadd;
    border-right: 2px solid #107c41;
    color: #107c41;
    font-weight: 500;
}

.bands {
    flex: 1;
}

.band {
    display: grid;
    grid-template-columns: 1131px 1133px;
    column-gap: 39px;
    align-items: start;
    height: 367.7px;
    --line: linear-gradient(#e1e1e1, #e1e1e1);
    background-color: #fff;
    background-image:
        var(--line), var(--line), var(--line), var(--line), var(--line), var(--line), var(--line),
        var(--line), var(--line), var(--line), var(--line), var(--line), var(--line), var(--line),
        repeating-linear-gradient(to bottom, #e1e1e1 33.5px, #e1e1e1 34.5px, transparent 34.5px, transparent 57.3px);
    background-repeat: no-repeat;
    background-size: 1px 100%, 1px 100%, 1px 100%, 1px 100%, 1px 100%, 1px 100%, 1px 100%, 1px 100%, 1px 100%, 1px 100%, 1px 100%, 1px 100%, 1px 100%, 1px 100%, 100% 100%;
    background-position: 355px 0, 484px 0, 543px 0, 680px 0, 774px 0, 1131px 0, 1169px 0, 1527px 0, 1655px 0, 1714px 0, 1851px 0, 1945px 0, 2302px 0, 2381px 0, 0 0;
}

/* team block */
.block {
    display: grid;
    grid-template-rows: 34.5px repeat(13, 23.8px);
    background-color: #3a3a3a;
    outline: 2px solid #000;
    outline-offset: -1px;
    color: #000;
    font-family: Roboto, sans-serif;
    font-size: 17px;
    letter-spacing: -0.25px;
}

.campus {
    grid-template-columns: 355.5px 129px 59px 136.5px 94.5px 356.5px;
}

.online {
    grid-template-columns: 357.5px 127.5px 59px 138px 94px 357px;
}

.cell {
    padding: 0 3px;
    overflow: hidden;
    line-height: 26px;
    white-space: nowrap;
}

.c-a { grid-column: 1; }
.c-b { grid-column: 2; }
.c-ab { grid-column: 1 / 3; }
.c-d { grid-column: 4; }
.c-e { grid-column: 5; }
.c-f { grid-column: 6; }

.r-1 { grid-row: 1; }
.r-3 { grid-row: 3; }
.r-4 { grid-row: 4; }
.r-5 { grid-row: 5; }
.r-7 { grid-row: 7; }
.r-8 { grid-row: 8; }
.r-9 { grid-row: 9; }
.r-11 { grid-row: 11; }
.r-12 { grid-row: 12; }
.r-13 { grid-row: 13; }

.title {
    grid-column: 1 / 4;
    grid-row: 1;
    padding-left: 3.5px;
    font-size: 25.5px;
    font-weight: 500;
    letter-spacing: -0.8px;
    line-height: 35px;
}

.campus .title { background-color: #c0e6f5; }
.online .title { background-color: #fbe3d6; }

.go {
    padding-top: 9px;
    border: 1px solid #000;
}

.campus .go { background-color: #45b0e1; }
.online .go { background-color: #e97132; }

.label {
    padding-left: 2px;
    background-color: #f1a983;
    border: 1px solid #000;
    line-height: 25px;
}

.prompt {
    background-color: #000;
    color: #fff;
    font-weight: 500;
    letter-spacing: -0.45px;
}

.prompt.r-1 {
    padding-top: 10px;
}

.arrow {
    font-family: "DejaVu Sans", sans-serif;
    font-size: 14px;
    font-weight: 400;
}

.input {
    background-color: #f2f2f2;
    border-top: 2px solid #000;
    border-bottom: 2px solid #000;
    border-right: 2px solid #000;
    line-height: 22px;
}

.white {
    background-color: #fff;
}

.num {
    padding-right: 2px;
    text-align: right;
}

.status {
    padding: 0 4px;
    background-color: #f2f2f2;
    border-bottom: 2px solid #000;
    border-top: 2px solid #000;
    font-size: 20.5px;
    font-weight: 500;
    letter-spacing: -0.6px;
    line-height: 40px;
}

.ok {
    background-color: #c6efce;
    color: #006100;
}
```
